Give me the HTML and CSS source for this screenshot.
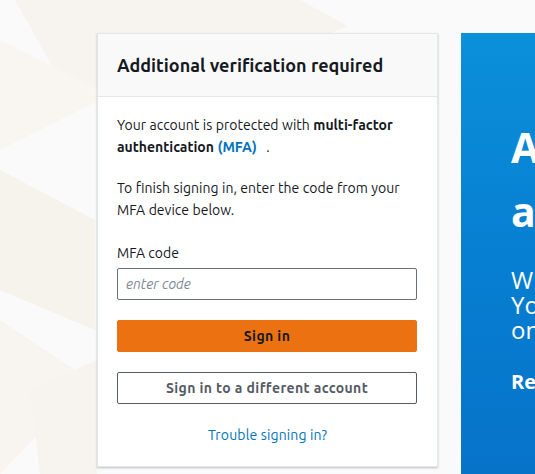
FILE: index.html
```html
<!DOCTYPE html>
<html lang="en">
<head>
<meta charset="utf-8">
<title>Additional verification required</title>
<link rel="stylesheet" href="styles.css">
</head>
<body>
<div class="bg">
  <svg class="bg-art" width="535" height="474" viewBox="0 0 535 474" aria-hidden="true">
    <polygon points="15,0 300,0 348,26 140,110 60,80" fill="#f7f3ee"/>
    <polygon points="0,40 110,95 0,150" fill="#f9f6f2"/>
    <polygon points="0,170 95,220 95,330 0,290" fill="#f6f2ec"/>
    <polygon points="0,320 90,380 0,474" fill="#f8f4ef"/>
    <polygon points="30,390 97,360 97,474 40,474" fill="#f7f3ee"/>
  </svg>
</div>
<main class="layout">
  <section class="card">
    <header class="card-head">
      <h1 class="title">Additional verification required</h1>
    </header>
    <div class="card-body">
      <p class="para">Your account is protected with <b>multi-factor authentication <a class="link" href="#">(MFA)</a></b> .</p>
      <p class="para">To finish signing in, enter the code from your MFA device below.</p>
      <label class="label" for="code">MFA code</label>
      <input class="input" id="code" type="text" placeholder="enter code">
      <button class="btn btn-primary" type="button">Sign in</button>
      <button class="btn btn-secondary" type="button">Sign in to a different account</button>
      <a class="trouble" href="#">Trouble signing in?</a>
    </div>
  </section>
  <aside class="promo">
    <div class="promo-inner">
      <h2 class="promo-title"><span class="ln">Amazon Q Developer</span><span class="ln">and agents</span></h2>
      <p class="promo-text"><span class="ln">With Amazon Q Developer,</span><span class="ln">You can build faster</span><span class="ln">on AWS.</span></p>
      <p class="promo-more">Read more</p>
    </div>
  </aside>
</main>
</body>
</html>
```
FILE: styles.css
```css
html, body {
  margin: 0;
  padding: 0;
  width: 535px;
  height: 474px;
  overflow: hidden;
  background: #fafafa;
  font-family: "Ubuntu", "Noto Sans", sans-serif;
  color: #16191f;
}

.bg {
  position: absolute;
  left: 0;
  top: 0;
}

.bg-art {
  display: block;
}

.layout {
  position: relative;
  display: flex;
  align-items: flex-start;
  padding: 33px 0 0 97px;
  gap: 23px;
}

.card {
  flex: 0 0 auto;
  width: 339px;
  background: #ffffff;
  border: 1px solid #e4e7e7;
  box-shadow: 0 1px 2px rgba(0, 28, 36, 0.25);
}

.card-head {
  background: #f9f9f9;
  border-bottom: 1px solid #e6e8e8;
  padding: 20px 19px;
}

.title {
  margin: 0;
  font-size: 18px;
  line-height: 22px;
  font-weight: 700;
  color: #16191f;
}

.card-body {
  display: flex;
  flex-direction: column;
  padding: 17px 19px 20px 19px;
}

.para {
  margin: 0 0 19px 0;
  font-size: 14px;
  line-height: 22px;
  word-spacing: 0.3px;
}

.para b {
  font-weight: 700;
}

.link {
  color: #0073bb;
  text-decoration: none;
  padding-right: 6px;
}

.label {
  font-size: 14px;
  line-height: 22px;
  margin-top: 2px;
  margin-bottom: 4px;
}

.input {
  box-sizing: border-box;
  width: 300px;
  height: 32px;
  margin: 0 0 20px 0;
  padding: 0 8px;
  border: 1px solid #687078;
  border-radius: 2px;
  font-family: inherit;
  font-size: 14px;
  color: #16191f;
  background: #ffffff;
}

.input::placeholder {
  color: #7d8998;
  font-style: italic;
}

.btn {
  box-sizing: border-box;
  width: 300px;
  height: 32px;
  margin: 0 0 20px 0;
  border-radius: 2px;
  font-family: inherit;
  font-size: 14px;
  font-weight: 700;
  letter-spacing: 0.4px;
  cursor: pointer;
}

.btn-primary {
  background: #ec7211;
  border: 1px solid #ec7211;
  color: #16191f;
}

.btn-secondary {
  background: #ffffff;
  border: 1px solid #545b64;
  color: #545b64;
}

.trouble {
  align-self: center;
  font-size: 14px;
  line-height: 22px;
  letter-spacing: 0.15px;
  color: #0073bb;
  text-decoration: none;
}

.promo {
  flex: 0 0 auto;
  width: 520px;
  height: 460px;
  background:
    radial-gradient(circle at 100% 100%, #6a3fe3 0, #6a3fe3 8px, rgba(106, 63, 227, 0) 24px),
    linear-gradient(180deg, #0b90da 0%, #0780d2 45%, #0672c8 100%);
  color: #ffffff;
  font-family: "Open Sans", "Noto Sans", sans-serif;
}

.promo-inner {
  padding: 82px 0 0 50px;
}

.ln {
  display: block;
  white-space: nowrap;
}

.promo-title {
  margin: 0;
  font-size: 41px;
  line-height: 64px;
  font-weight: 700;
}

.promo-text {
  margin: 24px 0 0 0;
  font-size: 24px;
  line-height: 25px;
  font-weight: 400;
}

.promo-more {
  margin: 28px 0 0 0;
  font-size: 20px;
  line-height: 24px;
  font-weight: 700;
}
```
